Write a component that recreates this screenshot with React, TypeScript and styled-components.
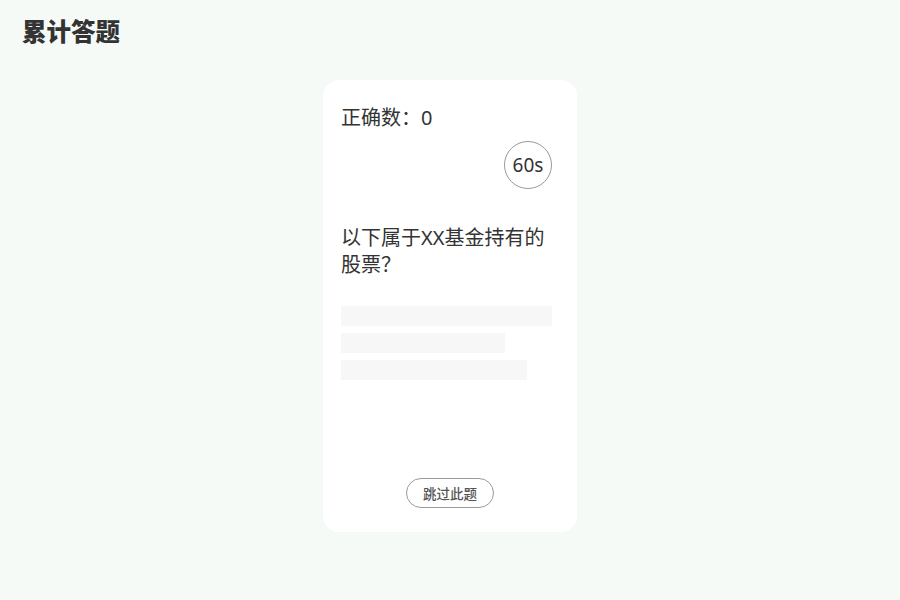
import React from "react";
import styled, { createGlobalStyle } from "styled-components";

const Global = createGlobalStyle`
  html, body { margin: 0; padding: 0; }
  body {
    background: #f5faf7;
    font-family: "Noto Sans", "Noto Sans CJK SC", sans-serif;
    color: #333;
  }
`;

const Page = styled.div`
  width: 900px;
  height: 600px;
  box-sizing: border-box;
  padding: 13px 22px 0;
  display: flex;
  flex-direction: column;
`;

const Title = styled.h1`
  margin: 0;
  font-size: 24.5px;
  line-height: 36px;
  font-weight: 900;
  color: #333;
  font-family: "Noto Sans CJK SC", sans-serif;
`;

const Center = styled.div`
  display: flex;
  justify-content: center;
  padding-top: 31px;
`;

const Card = styled.div`
  width: 254px;
  height: 452px;
  box-sizing: border-box;
  background: #fff;
  border-radius: 16px;
  padding: 23px 25px 24px 18px;
  display: flex;
  flex-direction: column;
`;

const Score = styled.div`
  font-size: 20px;
  line-height: 29px;
  color: #333;
  font-family: "Noto Sans", "Noto Sans CJK SC", sans-serif;
`;

const TimerRow = styled.div`
  display: flex;
  justify-content: flex-end;
  margin-top: 9px;
`;

const Timer = styled.div`
  width: 46px;
  height: 46px;
  border: 1px solid #999;
  border-radius: 50%;
  display: flex;
  align-items: center;
  justify-content: center;
  font-size: 19px;
  color: #333;
  font-family: "Noto Sans", sans-serif;
`;

const Question = styled.div`
  margin-top: 35px;
  font-size: 20px;
  line-height: 27px;
  color: #333;
  font-family: "Noto Sans", "Noto Sans CJK SC", sans-serif;
`;

const Options = styled.div`
  margin-top: 28px;
  display: flex;
  flex-direction: column;
  gap: 7px;
`;

const Bar = styled.div<{ $w: number }>`
  width: ${(p) => p.$w}px;
  height: 20px;
  background: #f7f7f7;
`;

const Footer = styled.div`
  margin-top: auto;
  display: flex;
  justify-content: center;
  padding-left: 7px;
`;

const Skip = styled.button`
  width: 88px;
  height: 30px;
  box-sizing: border-box;
  border: 1px solid #999;
  border-radius: 15px;
  background: #fff;
  font-size: 13.5px;
  font-weight: 500;
  color: #555;
  font-family: "Noto Sans CJK SC", sans-serif;
  padding: 0;
  cursor: pointer;
`;

export default function App() {
  return (
    <>
      <Global />
      <Page>
        <Title>累计答题</Title>
        <Center>
          <Card>
            <Score>正确数：0</Score>
            <TimerRow>
              <Timer>60s</Timer>
            </TimerRow>
            <Question>以下属于XX基金持有的股票？</Question>
            <Options>
              <Bar $w={211} />
              <Bar $w={164} />
              <Bar $w={186} />
            </Options>
            <Footer>
              <Skip>跳过此题</Skip>
            </Footer>
          </Card>
        </Center>
      </Page>
    </>
  );
}
